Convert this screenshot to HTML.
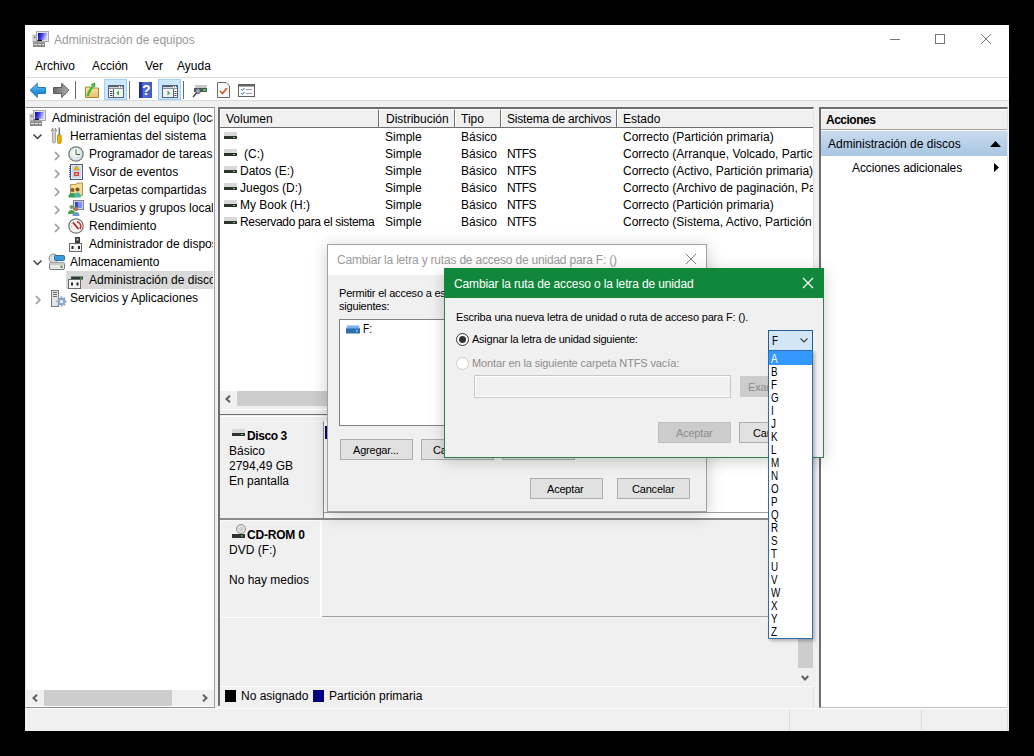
<!DOCTYPE html>
<html><head><meta charset="utf-8">
<style>
*{margin:0;padding:0;box-sizing:border-box}
html,body{width:1034px;height:756px;overflow:hidden;background:#000}
body{position:relative;font-family:"Liberation Sans",sans-serif;font-size:12px;color:#000}
.a{position:absolute}
.t{position:absolute;white-space:nowrap;line-height:14px}
svg{position:absolute;overflow:visible}
#win{left:25px;top:25px;width:984px;height:706px;background:#fff}
.sep{position:absolute;width:1px;background:#a0a0a0}
.tb{position:absolute;background:#cce8ff;border:1px solid #99d1ff}
</style></head><body>
<div id="win" class="a"></div>

<!-- ===== title bar ===== -->
<svg style="left:31px;top:29px" width="20" height="20" viewBox="0 0 20 20">
 <defs><linearGradient id="scra" x1="0" y1="0" x2="1" y2="0.3"><stop offset="0" stop-color="#0a0a90"/><stop offset="0.45" stop-color="#3a3ae0"/><stop offset="1" stop-color="#c8ccf8"/></linearGradient></defs>
 <rect x="2" y="6" width="3.5" height="7" fill="#d4d4d4" stroke="#a0a0a0" stroke-width="0.6"/>
 <rect x="3" y="7.5" width="1.5" height="1.5" fill="#5a8a40"/>
 <rect x="5.5" y="2.5" width="12" height="10" fill="#e4e6ea" stroke="#a8a8a8" stroke-width="1"/>
 <rect x="7" y="4" width="9" height="7" fill="url(#scra)"/>
 <path d="M6 12.5Q8 10.8 11 11.5" stroke="#101030" stroke-width="1.2" fill="none"/>
 <rect x="2" y="12.5" width="12" height="5.5" fill="#8a8a8a"/>
 <rect x="2" y="12.5" width="12" height="1" fill="#b0b0b0"/>
 <path d="M3 15.5H6M7 15.5H10M11 15.5H13" stroke="#e8e8e8" stroke-width="1.2"/>
</svg>
<div class="t" style="left:54px;top:33px;color:#999">Administración de equipos</div>
<div class="a" style="left:890px;top:39px;width:10px;height:1px;background:#777"></div>
<div class="a" style="left:935px;top:34px;width:10px;height:10px;border:1px solid #777"></div>
<svg style="left:981px;top:34px" width="10" height="10" viewBox="0 0 10 10"><path d="M0 0L10 10M10 0L0 10" stroke="#777" stroke-width="1"/></svg>

<!-- ===== menu ===== -->
<div class="t" style="left:35px;top:59px">Archivo</div>
<div class="t" style="left:92px;top:59px">Acción</div>
<div class="t" style="left:145px;top:59px">Ver</div>
<div class="t" style="left:177px;top:59px">Ayuda</div>
<div class="a" style="left:25px;top:77px;width:984px;height:1px;background:#dadada"></div>

<!-- ===== toolbar ===== -->
<svg style="left:29px;top:82px" width="18" height="17" viewBox="0 0 18 17">
 <defs><linearGradient id="bk" x1="0" y1="0" x2="0" y2="1"><stop offset="0" stop-color="#7cc8f8"/><stop offset="0.6" stop-color="#1f8fd8"/><stop offset="1" stop-color="#3aa0e8"/></linearGradient></defs>
 <path d="M1 8.3L8.3 1.3V5.5H16.5V11.5H8.3V15.5Z" fill="url(#bk)" stroke="#2a78b8" stroke-width="1" stroke-linejoin="round"/>
</svg>
<svg style="left:52px;top:82px" width="18" height="17" viewBox="0 0 18 17">
 <defs><linearGradient id="fw" x1="0" y1="0" x2="1" y2="0"><stop offset="0" stop-color="#6a6a6a"/><stop offset="1" stop-color="#b0b0b0"/></linearGradient></defs>
 <path d="M17 8.3L9.7 1.3V5.5H1.5V11.5H9.7V15.5Z" fill="url(#fw)" stroke="#5a5a5a" stroke-width="1" stroke-linejoin="round"/>
</svg>
<div class="sep" style="left:75px;top:81px;height:18px;background:#6a6a6a"></div>
<svg style="left:84px;top:82px" width="16" height="17" viewBox="0 0 16 17">
 <defs><linearGradient id="fd" x1="0" y1="0" x2="0" y2="1"><stop offset="0" stop-color="#f8e8a0"/><stop offset="1" stop-color="#f0c070"/></linearGradient></defs>
 <path d="M1.5 5H6.5L7.5 6H14.5V15.5H1.5Z" fill="url(#fd)" stroke="#9a8a40" stroke-width="1"/>
 <path d="M3 13.5C4 10 6 6 8.5 3.5L7 2.5L11 0.8L10.8 5L9.6 4.3C8 6.5 6 10 4.5 14Z" fill="#3ac83a" stroke="#2a8a2a" stroke-width="0.5"/>
</svg>
<div class="tb" style="left:104px;top:79px;width:23px;height:21px"></div>
<svg style="left:107px;top:84px" width="18" height="15" viewBox="0 0 18 15">
 <rect x="1.5" y="1.5" width="15" height="12" fill="#fff" stroke="#5a6470" stroke-width="1"/>
 <path d="M2 2.5H12M13 2.5H14M15 2.5H16" stroke="#5a6470" stroke-width="1.4"/>
 <path d="M2 4.5H16" stroke="#8a94a0" stroke-width="1"/>
 <path d="M6.5 5V13" stroke="#5a6470" stroke-width="1"/>
 <path d="M3 7.5H5.5M3 9.5H5.5M3 11.5H5.5" stroke="#3a4450" stroke-width="1.1"/>
 <rect x="7" y="5" width="9" height="8" fill="#f0f8f0"/>
 <path d="M12 6.5L9.3 9L12 11.5Z" fill="#38b038"/>
</svg>
<div class="sep" style="left:129px;top:81px;height:18px;background:#6a6a6a"></div>
<svg style="left:139px;top:82px" width="13" height="16" viewBox="0 0 13 16">
 <defs><linearGradient id="hp" x1="0" y1="0" x2="1" y2="0"><stop offset="0" stop-color="#1a2a90"/><stop offset="0.25" stop-color="#2a3ab0"/><stop offset="0.3" stop-color="#5a70d8"/><stop offset="1" stop-color="#4058c0"/></linearGradient></defs>
 <rect x="0" y="0" width="13" height="16" fill="url(#hp)"/>
 <text x="7.2" y="13" font-family="Liberation Sans" font-size="14" font-weight="bold" fill="#fff" text-anchor="middle">?</text>
</svg>
<div class="tb" style="left:158px;top:79px;width:23px;height:21px"></div>
<svg style="left:161px;top:84px" width="18" height="15" viewBox="0 0 18 15">
 <rect x="1.5" y="1.5" width="15" height="12" fill="#fff" stroke="#5a6470" stroke-width="1"/>
 <path d="M2 2.5H12M13 2.5H14M15 2.5H16" stroke="#5a6470" stroke-width="1.4"/>
 <path d="M2 4.5H16" stroke="#8a94a0" stroke-width="1"/>
 <path d="M12.5 5V13" stroke="#5a6470" stroke-width="1"/>
 <path d="M13.5 7.5H15.5M13.5 9.5H15.5M13.5 11.5H15.5" stroke="#3a4450" stroke-width="1.1"/>
 <rect x="2" y="5" width="10" height="8" fill="#f4f0f8"/>
 <path d="M6.5 6.5L9.2 9L6.5 11.5Z" fill="#38b038"/>
</svg>
<div class="sep" style="left:183px;top:81px;height:18px;background:#6a6a6a"></div>
<svg style="left:192px;top:84px" width="16" height="15" viewBox="0 0 16 15">
 <rect x="3" y="1" width="12" height="3" fill="#c8c8c8"/>
 <rect x="2" y="4" width="13" height="4" fill="#4a5a5a"/>
 <rect x="11" y="5" width="3" height="2" fill="#40d040"/>
 <circle cx="6" cy="7" r="2.5" fill="#9aa" stroke="#556" stroke-width="1"/>
 <path d="M4.5 9L1 13" stroke="#444" stroke-width="1.5"/>
</svg>
<svg style="left:217px;top:82px" width="13" height="16" viewBox="0 0 13 16">
 <path d="M0.5 0.5H9L12.5 4V15.5H0.5Z" fill="#fafafa" stroke="#6a6a6a"/>
 <path d="M3 9L5.5 11.5L10 6" stroke="#e05020" stroke-width="1.6" fill="none"/>
</svg>
<svg style="left:238px;top:84px" width="17" height="13" viewBox="0 0 17 13">
 <rect x="0.5" y="0.5" width="16" height="12" fill="#fafafa" stroke="#606060"/>
 <rect x="1" y="1" width="15" height="1.5" fill="#606060"/>
 <path d="M3 5L4.5 6.5L6.5 4M3 9L4.5 10.5L6.5 8" stroke="#3070d0" fill="none"/>
 <path d="M8 5.5H14M8 9.5H14" stroke="#a0a0a0"/>
</svg>

<!-- pane area bg -->
<div class="a" style="left:25px;top:100px;width:984px;height:631px;background:#f0f0f0;border-top:1px solid #dadada"></div>
<div class="a" style="left:25px;top:731px;width:984px;height:0;"></div>

<!-- ===== LEFT PANE ===== -->
<div class="a" style="left:25px;top:107px;width:190px;height:601px;background:#fff;border-top:1px solid #8c8c8c;border-right:1px solid #a0a0a0;border-bottom:1px solid #8c8c8c;border-left:1px solid #e3e3e3"></div>
<div class="a" style="left:0;top:0;width:213px;height:689px;overflow:hidden">
 <div class="a" style="left:66px;top:271px;width:147px;height:18px;background:#d9d9d9"></div>
 <!-- root -->
 <svg style="left:28px;top:108px" width="20" height="20" viewBox="0 0 20 20">
 <defs><linearGradient id="scrb" x1="0" y1="0" x2="1" y2="0.3"><stop offset="0" stop-color="#0a0a90"/><stop offset="0.45" stop-color="#3a3ae0"/><stop offset="1" stop-color="#c8ccf8"/></linearGradient></defs>
 <rect x="2" y="6" width="3.5" height="7" fill="#d4d4d4" stroke="#a0a0a0" stroke-width="0.6"/>
 <rect x="3" y="7.5" width="1.5" height="1.5" fill="#5a8a40"/>
 <rect x="5.5" y="2.5" width="12" height="10" fill="#e4e6ea" stroke="#a8a8a8" stroke-width="1"/>
 <rect x="7" y="4" width="9" height="7" fill="url(#scrb)"/>
 <path d="M6 12.5Q8 10.8 11 11.5" stroke="#101030" stroke-width="1.2" fill="none"/>
 <rect x="2" y="12.5" width="12" height="5.5" fill="#8a8a8a"/>
 <rect x="2" y="12.5" width="12" height="1" fill="#b0b0b0"/>
 <path d="M3 15.5H6M7 15.5H10M11 15.5H13" stroke="#e8e8e8" stroke-width="1.2"/>
</svg>
 <div class="t" style="left:52px;top:111px">Administración del equipo (local)</div>
 <!-- herramientas -->
 <svg style="left:33px;top:134px" width="9" height="6" viewBox="0 0 9 6"><path d="M0.5 0.5L4.5 4.5L8.5 0.5" stroke="#404040" stroke-width="1.5" fill="none"/></svg>
 <svg style="left:51px;top:127px" width="12" height="17" viewBox="0 0 12 17">
  <path d="M1.8 1.2C0.2 2.2 0.3 4.8 1.8 5.6V15.2C1.8 16.2 4.2 16.2 4.2 15.2V5.6C5.7 4.8 5.8 2.2 4.2 1.2V3.8H1.8Z" fill="#ececec" stroke="#7a7a7a" stroke-width="0.9"/>
  <rect x="7.6" y="0.5" width="1.3" height="7.5" fill="#6a6a6a"/>
  <rect x="6.4" y="7.5" width="3.8" height="9" rx="1.6" fill="#f0b400" stroke="#a07800" stroke-width="0.7"/>
 </svg>
 <div class="t" style="left:70px;top:129px">Herramientas del sistema</div>
 <!-- programador -->
 <svg style="left:54px;top:151px" width="6" height="10" viewBox="0 0 6 10"><path d="M1 1L4.8 5L1 9" stroke="#a0a0a0" stroke-width="1.8" fill="none"/></svg>
 <svg style="left:68px;top:146px" width="16" height="16" viewBox="0 0 16 16">
  <defs><radialGradient id="clk" cx="0.4" cy="0.4" r="0.7"><stop offset="0" stop-color="#fafcf0"/><stop offset="1" stop-color="#c8d8e8"/></radialGradient></defs>
  <circle cx="8" cy="8" r="7.2" fill="url(#clk)" stroke="#7a7a7a" stroke-width="1.3"/>
  <path d="M8 3.5V8.5H12" stroke="#506040" stroke-width="1" fill="none"/>
 </svg>
 <div class="t" style="left:89px;top:147px">Programador de tareas</div>
 <!-- visor -->
 <svg style="left:54px;top:169px" width="6" height="10" viewBox="0 0 6 10"><path d="M1 1L4.8 5L1 9" stroke="#a0a0a0" stroke-width="1.8" fill="none"/></svg>
 <svg style="left:68px;top:164px" width="16" height="16" viewBox="0 0 16 16">
  <rect x="2.5" y="0.5" width="12" height="15" fill="#e8ecf4" stroke="#4a5a80"/>
  <path d="M4 3H13M4 5H13M4 7H13M4 9H13M4 11H13M4 13H13" stroke="#a8b4d0" stroke-width="0.8"/>
  <path d="M1.5 2V14" stroke="#4a5a80" stroke-width="1" stroke-dasharray="1 1"/>
  <path d="M8.5 1.5L11 6H6Z" fill="#f0c000" stroke="#a08000" stroke-width="0.5"/>
  <rect x="6" y="8" width="5" height="4" fill="#d84040"/>
  <path d="M7.5 9L9.5 11M9.5 9L7.5 11" stroke="#fff" stroke-width="0.7"/>
 </svg>
 <div class="t" style="left:89px;top:165px">Visor de eventos</div>
 <!-- carpetas -->
 <svg style="left:54px;top:187px" width="6" height="10" viewBox="0 0 6 10"><path d="M1 1L4.8 5L1 9" stroke="#a0a0a0" stroke-width="1.8" fill="none"/></svg>
 <svg style="left:68px;top:182px" width="16" height="16" viewBox="0 0 16 16">
  <path d="M2.5 2.5H8L9 1H14.5V13.5H2.5Z" fill="#f4dc90" stroke="#b09a50"/>
  <circle cx="4.5" cy="8" r="2" fill="#8a5a30"/>
  <path d="M0.5 15.5C0.5 12 2 11 4.5 11C7 11 8 12 8 15.5Z" fill="#3aa050"/>
  <circle cx="9.5" cy="7.5" r="2" fill="#7a5028"/>
  <path d="M6 15.5C6 12 7.5 10.5 9.5 10.5C11.5 10.5 13 12 13 15.5Z" fill="#50b8a0"/>
 </svg>
 <div class="t" style="left:89px;top:183px">Carpetas compartidas</div>
 <!-- usuarios -->
 <svg style="left:54px;top:205px" width="6" height="10" viewBox="0 0 6 10"><path d="M1 1L4.8 5L1 9" stroke="#a0a0a0" stroke-width="1.8" fill="none"/></svg>
 <svg style="left:68px;top:200px" width="16" height="16" viewBox="0 0 16 16">
  <rect x="5.5" y="0.5" width="10" height="9" fill="#c8d0e0" stroke="#7a8498"/>
  <rect x="7" y="2" width="7" height="6" fill="#3848c0"/>
  <rect x="10" y="2" width="4" height="6" fill="#8090e8"/>
  <circle cx="3.5" cy="7" r="2" fill="#70a060"/>
  <path d="M0 14C0 11 1.5 10 3.5 10C5.5 10 7 11 7 14Z" fill="#48a048"/>
  <circle cx="8" cy="9" r="2.2" fill="#b07858"/>
  <path d="M4.5 16C4.5 13 6 12 8 12C10 12 11.5 13 11.5 16Z" fill="#6a98c8"/>
 </svg>
 <div class="t" style="left:89px;top:201px">Usuarios y grupos locales</div>
 <!-- rendimiento -->
 <svg style="left:54px;top:223px" width="6" height="10" viewBox="0 0 6 10"><path d="M1 1L4.8 5L1 9" stroke="#a0a0a0" stroke-width="1.8" fill="none"/></svg>
 <svg style="left:68px;top:218px" width="16" height="16" viewBox="0 0 16 16">
  <circle cx="8" cy="8" r="7.2" fill="#f4f4f4" stroke="#7a7a7a" stroke-width="1.3"/>
  <path d="M3.5 10A5 5 0 0 1 6 3.6" stroke="#a0a0a0" stroke-width="1" fill="none" stroke-dasharray="1 1"/>
  <path d="M9 3.5A5 5 0 0 1 12 11" stroke="#d03030" stroke-width="1.6" fill="none"/>
  <path d="M5 4.5L10.5 11" stroke="#c02020" stroke-width="1.8"/>
 </svg>
 <div class="t" style="left:89px;top:219px">Rendimiento</div>
 <!-- admin dispositivos -->
 <svg style="left:68px;top:236px" width="16" height="16" viewBox="0 0 16 16">
  <rect x="7" y="1" width="5" height="7" fill="#3a3a3a"/>
  <rect x="8.5" y="2.5" width="2" height="2" fill="#c0c0c0"/>
  <rect x="1.5" y="7.5" width="12" height="8" fill="#f4f4f4" stroke="#6a6a6a"/>
  <rect x="3.5" y="10" width="2" height="3" fill="#2a2a2a"/>
  <rect x="10" y="10" width="2" height="3" fill="#2a2a2a"/>
 </svg>
 <div class="t" style="left:89px;top:237px">Administrador de dispositivos</div>
 <!-- almacenamiento -->
 <svg style="left:33px;top:260px" width="9" height="6" viewBox="0 0 9 6"><path d="M0.5 0.5L4.5 4.5L8.5 0.5" stroke="#404040" stroke-width="1.5" fill="none"/></svg>
 <svg style="left:48px;top:253px" width="18" height="18" viewBox="0 0 18 18">
  <circle cx="5.5" cy="5.5" r="4.5" fill="#d8d8d8" stroke="#8a8a8a"/>
  <circle cx="5.5" cy="5.5" r="1.2" fill="#fff"/>
  <rect x="6.5" y="2.5" width="10" height="5" rx="1" fill="#3a9ad8" stroke="#2a70a8"/>
  <rect x="1.5" y="9.5" width="15" height="7" rx="1.5" fill="#e8e8e8" stroke="#7a7a7a"/>
  <rect x="1.5" y="9.5" width="15" height="2.5" rx="1" fill="#c8c8c8"/>
  <rect x="12.5" y="12.5" width="2" height="2.5" fill="#58a040"/>
 </svg>
 <div class="t" style="left:70px;top:255px">Almacenamiento</div>
 <!-- admin discos -->
 <svg style="left:68px;top:273px" width="16" height="16" viewBox="0 0 16 16">
  <rect x="3" y="3.5" width="12" height="3" fill="#2e3a34"/>
  <rect x="12" y="4.5" width="2" height="1" fill="#50d050"/>
  <rect x="0.5" y="6.5" width="12" height="9" fill="#f4f4f4" stroke="#6a6a6a"/>
  <rect x="3" y="9.5" width="2" height="3" fill="#2a2a2a"/>
  <rect x="8.5" y="9.5" width="2" height="3" fill="#2a2a2a"/>
 </svg>
 <div class="t" style="left:89px;top:273px">Administración de discos</div>
 <!-- servicios -->
 <svg style="left:35px;top:295px" width="6" height="10" viewBox="0 0 6 10"><path d="M1 1L4.8 5L1 9" stroke="#a0a0a0" stroke-width="1.8" fill="none"/></svg>
 <svg style="left:50px;top:290px" width="17" height="17" viewBox="0 0 17 17">
  <rect x="1.5" y="0.5" width="7" height="16" fill="#e4e4e4" stroke="#7a7a7a"/>
  <path d="M3 2.5H7M3 4.5H7M3 6.5H7" stroke="#6a6a6a" stroke-width="1"/>
  <g transform="translate(11.5 11.5)">
   <circle r="4" fill="#8aa8c8"/>
   <path d="M0 -5.2V5.2M-5.2 0H5.2M-3.7 -3.7L3.7 3.7M3.7 -3.7L-3.7 3.7" stroke="#8aa8c8" stroke-width="1.6"/>
   <circle r="1.6" fill="#fff"/>
  </g>
 </svg>
 <div class="t" style="left:70px;top:291px">Servicios y Aplicaciones</div>
</div>
<!-- left h-scrollbar -->
<div class="a" style="left:26px;top:690px;width:188px;height:16px;background:#f0f0f0"></div>
<div class="a" style="left:44px;top:690px;width:128px;height:16px;background:#cdcdcd"></div>
<svg style="left:32px;top:694px" width="6" height="8" viewBox="0 0 6 8"><path d="M5 0.8L1.5 4L5 7.2" stroke="#606060" stroke-width="2" fill="none"/></svg>
<svg style="left:202px;top:694px" width="6" height="8" viewBox="0 0 6 8"><path d="M1 0.8L4.5 4L1 7.2" stroke="#606060" stroke-width="2" fill="none"/></svg>
<!-- ===== MIDDLE PANE ===== -->
<div class="a" style="left:218px;top:107px;width:596px;height:599px;background:#f0f0f0;border-top:2px solid #6d6d6d;border-left:2px solid #6d6d6d;border-right:1px solid #e3e3e3;border-bottom:1px solid #a0a0a0"></div>
<!-- list area -->
<div class="a" style="left:220px;top:109px;width:593px;height:282px;background:#fff"></div>
<!-- header -->
<div class="a" style="left:220px;top:109px;width:593px;height:19px;background:#f0f0f0;border-bottom:1px solid #6d6d6d"></div>
<div class="a" style="left:220px;top:109px;width:159px;height:18px;border-top:1px solid #fff;border-left:1px solid #fff;border-right:1px solid #707070"></div>
<div class="a" style="left:379px;top:109px;width:76px;height:18px;border-top:1px solid #fff;border-left:1px solid #fff;border-right:1px solid #707070"></div>
<div class="a" style="left:455px;top:109px;width:46px;height:18px;border-top:1px solid #fff;border-left:1px solid #fff;border-right:1px solid #707070"></div>
<div class="a" style="left:501px;top:109px;width:116px;height:18px;border-top:1px solid #fff;border-left:1px solid #fff;border-right:1px solid #707070"></div>
<div class="a" style="left:617px;top:109px;width:197px;height:18px;border-top:1px solid #fff;border-left:1px solid #fff"></div>
<div class="t" style="left:226px;top:112px">Volumen</div>
<div class="t" style="left:386px;top:112px">Distribución</div>
<div class="t" style="left:461px;top:112px">Tipo</div>
<div class="t" style="left:507px;top:112px;letter-spacing:-0.21px">Sistema de archivos</div>
<div class="t" style="left:623px;top:112px">Estado</div>
<!-- rows -->
<div class="a" style="left:220px;top:128px;width:593px;height:260px;overflow:hidden">
 <svg style="left:4px;top:4px" width="13" height="8" viewBox="0 0 13 8"><rect x="0" y="0" width="13" height="4" fill="#d8d8d8"/><rect x="0" y="4" width="13" height="3" fill="#2e3430"/><rect x="9" y="5" width="2" height="1" fill="#50e050"/></svg>
 <div class="t" style="left:165px;top:2px">Simple</div>
 <div class="t" style="left:241px;top:2px">Básico</div>
 <div class="t" style="left:403px;top:2px">Correcto (Partición primaria)</div>
 <svg style="left:4px;top:21px" width="13" height="8" viewBox="0 0 13 8"><rect x="0" y="0" width="13" height="4" fill="#d8d8d8"/><rect x="0" y="4" width="13" height="3" fill="#2e3430"/><rect x="9" y="5" width="2" height="1" fill="#50e050"/></svg>
 <div class="t" style="left:24px;top:19px">(C:)</div>
 <div class="t" style="left:165px;top:19px">Simple</div>
 <div class="t" style="left:241px;top:19px">Básico</div>
 <div class="t" style="left:287px;top:19px;letter-spacing:-0.6px">NTFS</div>
 <div class="t" style="left:403px;top:19px">Correcto (Arranque, Volcado, Partición primaria)</div>
 <svg style="left:4px;top:38px" width="13" height="8" viewBox="0 0 13 8"><rect x="0" y="0" width="13" height="4" fill="#d8d8d8"/><rect x="0" y="4" width="13" height="3" fill="#2e3430"/><rect x="9" y="5" width="2" height="1" fill="#50e050"/></svg>
 <div class="t" style="left:20px;top:36px">Datos (E:)</div>
 <div class="t" style="left:165px;top:36px">Simple</div>
 <div class="t" style="left:241px;top:36px">Básico</div>
 <div class="t" style="left:287px;top:36px;letter-spacing:-0.6px">NTFS</div>
 <div class="t" style="left:403px;top:36px">Correcto (Activo, Partición primaria)</div>
 <svg style="left:4px;top:55px" width="13" height="8" viewBox="0 0 13 8"><rect x="0" y="0" width="13" height="4" fill="#d8d8d8"/><rect x="0" y="4" width="13" height="3" fill="#2e3430"/><rect x="9" y="5" width="2" height="1" fill="#50e050"/></svg>
 <div class="t" style="left:20px;top:53px">Juegos (D:)</div>
 <div class="t" style="left:165px;top:53px">Simple</div>
 <div class="t" style="left:241px;top:53px">Básico</div>
 <div class="t" style="left:287px;top:53px;letter-spacing:-0.6px">NTFS</div>
 <div class="t" style="left:403px;top:53px">Correcto (Archivo de paginación, Partición primaria)</div>
 <svg style="left:4px;top:72px" width="13" height="8" viewBox="0 0 13 8"><rect x="0" y="0" width="13" height="4" fill="#d8d8d8"/><rect x="0" y="4" width="13" height="3" fill="#2e3430"/><rect x="9" y="5" width="2" height="1" fill="#50e050"/></svg>
 <div class="t" style="left:20px;top:70px">My Book (H:)</div>
 <div class="t" style="left:165px;top:70px">Simple</div>
 <div class="t" style="left:241px;top:70px">Básico</div>
 <div class="t" style="left:287px;top:70px;letter-spacing:-0.6px">NTFS</div>
 <div class="t" style="left:403px;top:70px">Correcto (Partición primaria)</div>
 <svg style="left:4px;top:89px" width="13" height="8" viewBox="0 0 13 8"><rect x="0" y="0" width="13" height="4" fill="#d8d8d8"/><rect x="0" y="4" width="13" height="3" fill="#2e3430"/><rect x="9" y="5" width="2" height="1" fill="#50e050"/></svg>
 <div class="t" style="left:20px;top:87px;letter-spacing:-0.34px">Reservado para el sistema</div>
 <div class="t" style="left:165px;top:87px">Simple</div>
 <div class="t" style="left:241px;top:87px">Básico</div>
 <div class="t" style="left:287px;top:87px;letter-spacing:-0.6px">NTFS</div>
 <div class="t" style="left:403px;top:87px">Correcto (Sistema, Activo, Partición primaria)</div>
</div>
<!-- list h-scrollbar -->
<div class="a" style="left:220px;top:391px;width:593px;height:16px;background:#f0f0f0"></div>
<div class="a" style="left:237px;top:391px;width:400px;height:15px;background:#cdcdcd"></div>
<svg style="left:225px;top:395px" width="6" height="8" viewBox="0 0 6 8"><path d="M5 0.8L1.5 4L5 7.2" stroke="#606060" stroke-width="2" fill="none"/></svg>
<div class="a" style="left:220px;top:409px;width:593px;height:1px;background:#fff"></div>
<div class="a" style="left:220px;top:414px;width:593px;height:1px;background:#6d6d6d"></div>
<!-- disk view -->
<div class="a" style="left:220px;top:415px;width:577px;height:271px;background:#f0f0f0"></div>
<!-- disk 3 block -->
<div class="a" style="left:220px;top:416px;width:577px;height:1px;background:#fff"></div>
<div class="a" style="left:220px;top:421px;width:104px;height:99px;background:#f0f0f0;border-top:1px solid #f8f8f8;border-right:1px solid #8a8a8a;border-bottom:2px solid #8a8a8a"></div>
<div class="a" style="left:324px;top:421px;width:473px;height:99px;background:#fff;border-bottom:2px solid #8a8a8a"></div>
<div class="a" style="left:325px;top:426px;width:472px;height:13px;background:#000080"></div>
<div class="a" style="left:324px;top:512px;width:473px;height:1px;background:#a0a0a0"></div>
<svg style="left:232px;top:429px" width="13" height="8" viewBox="0 0 13 8"><rect x="0" y="0" width="13" height="4" fill="#d8d8d8"/><rect x="0" y="4" width="13" height="3" fill="#2e3430"/><rect x="9" y="5" width="2" height="1" fill="#50e050"/></svg>
<div class="t" style="left:247px;top:429px;font-weight:bold;letter-spacing:-0.4px">Disco 3</div>
<div class="t" style="left:229px;top:444px">Básico</div>
<div class="t" style="left:229px;top:459px">2794,49 GB</div>
<div class="t" style="left:229px;top:474px">En pantalla</div>
<!-- cd-rom block -->
<div class="a" style="left:220px;top:520px;width:102px;height:98px;background:#f0f0f0;border-top:1px solid #fafafa;border-left:1px solid #fafafa;border-right:2px solid #fbfbfb;border-bottom:1px solid #fff"></div>
<div class="a" style="left:322px;top:520px;width:475px;height:97px;background:#f0f0f0;border-bottom:1px solid #a0a0a0"></div>
<svg style="left:232px;top:524px" width="15" height="14" viewBox="0 0 15 14">
 <circle cx="9" cy="5" r="4.5" fill="#e0e0e0" stroke="#909090"/>
 <circle cx="9" cy="5" r="1.2" fill="#fff" stroke="#909090" stroke-width="0.6"/>
 <rect x="0" y="10" width="13" height="4" fill="#2e3430"/><rect x="9" y="11.5" width="2" height="1" fill="#50e050"/>
</svg>
<div class="t" style="left:247px;top:528px;font-weight:bold;letter-spacing:-0.2px">CD-ROM 0</div>
<div class="t" style="left:229px;top:543px">DVD (F:)</div>
<div class="t" style="left:229px;top:573px">No hay medios</div>
<!-- v scrollbar -->
<div class="a" style="left:797px;top:414px;width:17px;height:272px;background:#f0f0f0"></div>
<div class="a" style="left:798px;top:430px;width:15px;height:238px;background:#cdcdcd"></div>
<svg style="left:801px;top:675px" width="8" height="6" viewBox="0 0 8 6"><path d="M0.8 1L4 4.5L7.2 1" stroke="#606060" stroke-width="2" fill="none"/></svg>
<!-- legend -->
<div class="a" style="left:220px;top:686px;width:593px;height:20px;background:#f0f0f0;border-top:1px solid #fff"></div>
<div class="a" style="left:225px;top:690px;width:11px;height:12px;background:#000"></div>
<div class="t" style="left:241px;top:689px">No asignado</div>
<div class="a" style="left:313px;top:690px;width:11px;height:12px;background:#000080"></div>
<div class="t" style="left:329px;top:689px">Partición primaria</div>

<!-- ===== RIGHT PANE ===== -->
<div class="a" style="left:819px;top:107px;width:189px;height:601px;background:#fff;border-top:2px solid #6d6d6d;border-left:2px solid #6d6d6d;border-right:1px solid #e0e0e0;border-bottom:1px solid #c0c0c0"></div>
<div class="a" style="left:821px;top:109px;width:186px;height:21px;background:#f0f0f0;border-top:1px solid #fff;border-bottom:1px solid #a0a0a0"></div>
<div class="t" style="left:826px;top:113px;font-weight:bold;letter-spacing:-0.5px">Acciones</div>
<div class="a" style="left:821px;top:131px;width:186px;height:25px;background:linear-gradient(#c9dbef,#a9c6e3)"></div>
<div class="t" style="left:828px;top:137px">Administración de discos</div>
<svg style="left:990px;top:141px" width="11" height="6" viewBox="0 0 11 6"><path d="M0 6L5.5 0L11 6Z" fill="#000"/></svg>
<div class="t" style="left:852px;top:161px;letter-spacing:-0.1px">Acciones adicionales</div>
<svg style="left:994px;top:163px" width="5" height="9" viewBox="0 0 5 9"><path d="M0 0L5 4.5L0 9Z" fill="#000"/></svg>

<!-- ===== STATUS BAR ===== -->
<div class="a" style="left:25px;top:708px;width:984px;height:23px;background:#f0f0f0;border-top:1px solid #fff"></div>
<div class="a" style="left:789px;top:710px;width:1px;height:21px;background:#dcdcdc"></div>
<div class="a" style="left:921px;top:710px;width:1px;height:21px;background:#dcdcdc"></div>
<div class="a" style="left:1007px;top:710px;width:1px;height:21px;background:#dcdcdc"></div>
<!-- ===== DIALOG 1 ===== -->
<div class="a" style="left:327px;top:244px;width:380px;height:268px;background:#f0f0f0;border:1px solid #a0a0a0;box-shadow:0 3px 16px rgba(0,0,0,0.2)"></div>
<div class="a" style="left:328px;top:245px;width:378px;height:30px;background:#fff"></div>
<div class="t" style="left:337px;top:253px;color:#9a9a9a;letter-spacing:-0.2px">Cambiar la letra y rutas de acceso de unidad para F: ()</div>
<svg style="left:686px;top:254px" width="10" height="10" viewBox="0 0 10 10"><path d="M0 0L10 10M10 0L0 10" stroke="#808080" stroke-width="1"/></svg>
<div class="t" style="left:339px;top:286px;font-size:11px;letter-spacing:-0.2px">Permitir el acceso a este volumen mediante las siguientes letras de unidad y</div>
<div class="t" style="left:339px;top:299px;font-size:11px;letter-spacing:-0.2px">siguientes:</div>
<div class="a" style="left:339px;top:319px;width:300px;height:107px;background:#fff;border:1px solid #828282"></div>
<svg style="left:346px;top:325px" width="14" height="9" viewBox="0 0 14 9"><path d="M1 0.5H13L13.5 3H0.5Z" fill="#7ab4e8"/><rect x="0" y="3" width="14" height="5.5" fill="#2e70ae"/><rect x="0" y="3" width="14" height="1" fill="#4a90d0"/><rect x="10" y="5" width="1.5" height="1.5" fill="#b8dcf8"/></svg>
<div class="t" style="left:363px;top:322px;font-size:12px;transform:scaleX(.85);transform-origin:0 0">F:</div>
<div class="a" style="left:340px;top:439px;width:73px;height:21px;background:#e1e1e1;border:1px solid #adadad"></div>
<div class="t" style="left:353px;top:443px;font-size:11px;letter-spacing:-0.2px">Agregar...</div>
<div class="a" style="left:421px;top:439px;width:73px;height:21px;background:#e1e1e1;border:1px solid #adadad"></div>
<div class="t" style="left:433px;top:443px;font-size:11px;letter-spacing:-0.2px">Cambiar...</div>
<div class="a" style="left:502px;top:439px;width:73px;height:21px;background:#e1e1e1;border:1px solid #adadad"></div>
<div class="a" style="left:530px;top:478px;width:73px;height:21px;background:#e1e1e1;border:1px solid #adadad"></div>
<div class="t" style="left:547px;top:482px;font-size:11px;letter-spacing:-0.2px">Aceptar</div>
<div class="a" style="left:617px;top:478px;width:73px;height:21px;background:#e1e1e1;border:1px solid #adadad"></div>
<div class="t" style="left:632px;top:482px;font-size:11px;letter-spacing:-0.2px">Cancelar</div>

<!-- ===== DIALOG 2 ===== -->
<div class="a" style="left:444px;top:268px;width:380px;height:190px;background:#f0f0f0;border:1px solid #3d7b57;box-shadow:0 3px 14px rgba(0,0,0,0.2)"></div>
<div class="a" style="left:445px;top:298px;width:378px;height:159px;border:1px solid #e4f6e8;border-top:none"></div>
<div class="a" style="left:444px;top:268px;width:380px;height:30px;background:#11873c"></div>
<div class="t" style="left:454px;top:277px;color:#fff;letter-spacing:-0.13px">Cambiar la ruta de acceso o la letra de unidad</div>
<svg style="left:803px;top:278px" width="10" height="10" viewBox="0 0 10 10"><path d="M0 0L10 10M10 0L0 10" stroke="#fff" stroke-width="1.2"/></svg>
<div class="t" style="left:456px;top:310px;font-size:11px;letter-spacing:-0.17px">Escriba una nueva letra de unidad o ruta de acceso para F: ().</div>
<svg style="left:456px;top:333px" width="13" height="13" viewBox="0 0 13 13"><circle cx="6.5" cy="6.5" r="6" fill="#fff" stroke="#333" stroke-width="1"/><circle cx="6.5" cy="6.5" r="3.5" fill="#333"/></svg>
<div class="t" style="left:472px;top:332px;font-size:11px;letter-spacing:-0.25px">Asignar la letra de unidad siguiente:</div>
<svg style="left:456px;top:357px" width="13" height="13" viewBox="0 0 13 13"><circle cx="6.5" cy="6.5" r="6" fill="#fff" stroke="#cccccc" stroke-width="1"/></svg>
<div class="t" style="left:472px;top:356px;font-size:11px;letter-spacing:-0.12px;color:#8d8d8d">Montar en la siguiente carpeta NTFS vacía:</div>
<div class="a" style="left:474px;top:375px;width:257px;height:23px;background:#f0f0f0;border:1px solid #c8c8c8;box-shadow:inset 1px 1px 0 #fff,inset 0 -1px 0 #fff"></div>
<div class="a" style="left:740px;top:376px;width:73px;height:21px;background:#cccccc"></div>
<div class="t" style="left:748px;top:380px;font-size:11px;color:#8d8d8d;letter-spacing:-0.2px">Examinar...</div>
<div class="a" style="left:658px;top:422px;width:73px;height:21px;background:#cccccc;border:1px solid #bfbfbf"></div>
<div class="t" style="left:676px;top:426px;font-size:11px;color:#8d8d8d;letter-spacing:-0.2px">Aceptar</div>
<div class="a" style="left:739px;top:422px;width:73px;height:21px;background:#e1e1e1;border:1px solid #adadad"></div>
<div class="t" style="left:753px;top:426px;font-size:11px;letter-spacing:-0.2px">Cancelar</div>
<!-- combobox -->
<div class="a" style="left:768px;top:330px;width:45px;height:21px;background:#d2e6f8;border:1px solid #1f5e94"></div>
<div class="t" style="left:772px;top:334px;font-size:12px;transform:scaleX(.82);transform-origin:0 0">F</div>
<svg style="left:800px;top:338px" width="8" height="5" viewBox="0 0 8 5"><path d="M0.5 0.5L4 4L7.5 0.5" stroke="#404040" stroke-width="1.1" fill="none"/></svg>
<!-- dropdown list -->
<div class="a" style="left:768px;top:350px;width:45px;height:289px;background:#fff;border:1px solid #2e6ea8;box-shadow:2px 2px 3px rgba(0,0,0,0.25)"></div>
<div class="a" style="left:769px;top:351px;width:43px;height:14px;background:#3399ff"></div>
<div class="t" style="left:771px;top:353px;font-size:12px;line-height:13px;color:#fff;transform:scaleX(.82);transform-origin:0 0">A</div>
<div class="t" style="left:771px;top:366px;font-size:12px;line-height:13px;color:#000;transform:scaleX(.82);transform-origin:0 0">B</div>
<div class="t" style="left:771px;top:379px;font-size:12px;line-height:13px;color:#000;transform:scaleX(.82);transform-origin:0 0">F</div>
<div class="t" style="left:771px;top:392px;font-size:12px;line-height:13px;color:#000;transform:scaleX(.82);transform-origin:0 0">G</div>
<div class="t" style="left:771px;top:405px;font-size:12px;line-height:13px;color:#000;transform:scaleX(.82);transform-origin:0 0">I</div>
<div class="t" style="left:771px;top:418px;font-size:12px;line-height:13px;color:#000;transform:scaleX(.82);transform-origin:0 0">J</div>
<div class="t" style="left:771px;top:431px;font-size:12px;line-height:13px;color:#000;transform:scaleX(.82);transform-origin:0 0">K</div>
<div class="t" style="left:771px;top:444px;font-size:12px;line-height:13px;color:#000;transform:scaleX(.82);transform-origin:0 0">L</div>
<div class="t" style="left:771px;top:457px;font-size:12px;line-height:13px;color:#000;transform:scaleX(.82);transform-origin:0 0">M</div>
<div class="t" style="left:771px;top:470px;font-size:12px;line-height:13px;color:#000;transform:scaleX(.82);transform-origin:0 0">N</div>
<div class="t" style="left:771px;top:483px;font-size:12px;line-height:13px;color:#000;transform:scaleX(.82);transform-origin:0 0">O</div>
<div class="t" style="left:771px;top:496px;font-size:12px;line-height:13px;color:#000;transform:scaleX(.82);transform-origin:0 0">P</div>
<div class="t" style="left:771px;top:509px;font-size:12px;line-height:13px;color:#000;transform:scaleX(.82);transform-origin:0 0">Q</div>
<div class="t" style="left:771px;top:522px;font-size:12px;line-height:13px;color:#000;transform:scaleX(.82);transform-origin:0 0">R</div>
<div class="t" style="left:771px;top:535px;font-size:12px;line-height:13px;color:#000;transform:scaleX(.82);transform-origin:0 0">S</div>
<div class="t" style="left:771px;top:548px;font-size:12px;line-height:13px;color:#000;transform:scaleX(.82);transform-origin:0 0">T</div>
<div class="t" style="left:771px;top:561px;font-size:12px;line-height:13px;color:#000;transform:scaleX(.82);transform-origin:0 0">U</div>
<div class="t" style="left:771px;top:574px;font-size:12px;line-height:13px;color:#000;transform:scaleX(.82);transform-origin:0 0">V</div>
<div class="t" style="left:771px;top:587px;font-size:12px;line-height:13px;color:#000;transform:scaleX(.82);transform-origin:0 0">W</div>
<div class="t" style="left:771px;top:600px;font-size:12px;line-height:13px;color:#000;transform:scaleX(.82);transform-origin:0 0">X</div>
<div class="t" style="left:771px;top:613px;font-size:12px;line-height:13px;color:#000;transform:scaleX(.82);transform-origin:0 0">Y</div>
<div class="t" style="left:771px;top:626px;font-size:12px;line-height:13px;color:#000;transform:scaleX(.82);transform-origin:0 0">Z</div>
</body></html>
